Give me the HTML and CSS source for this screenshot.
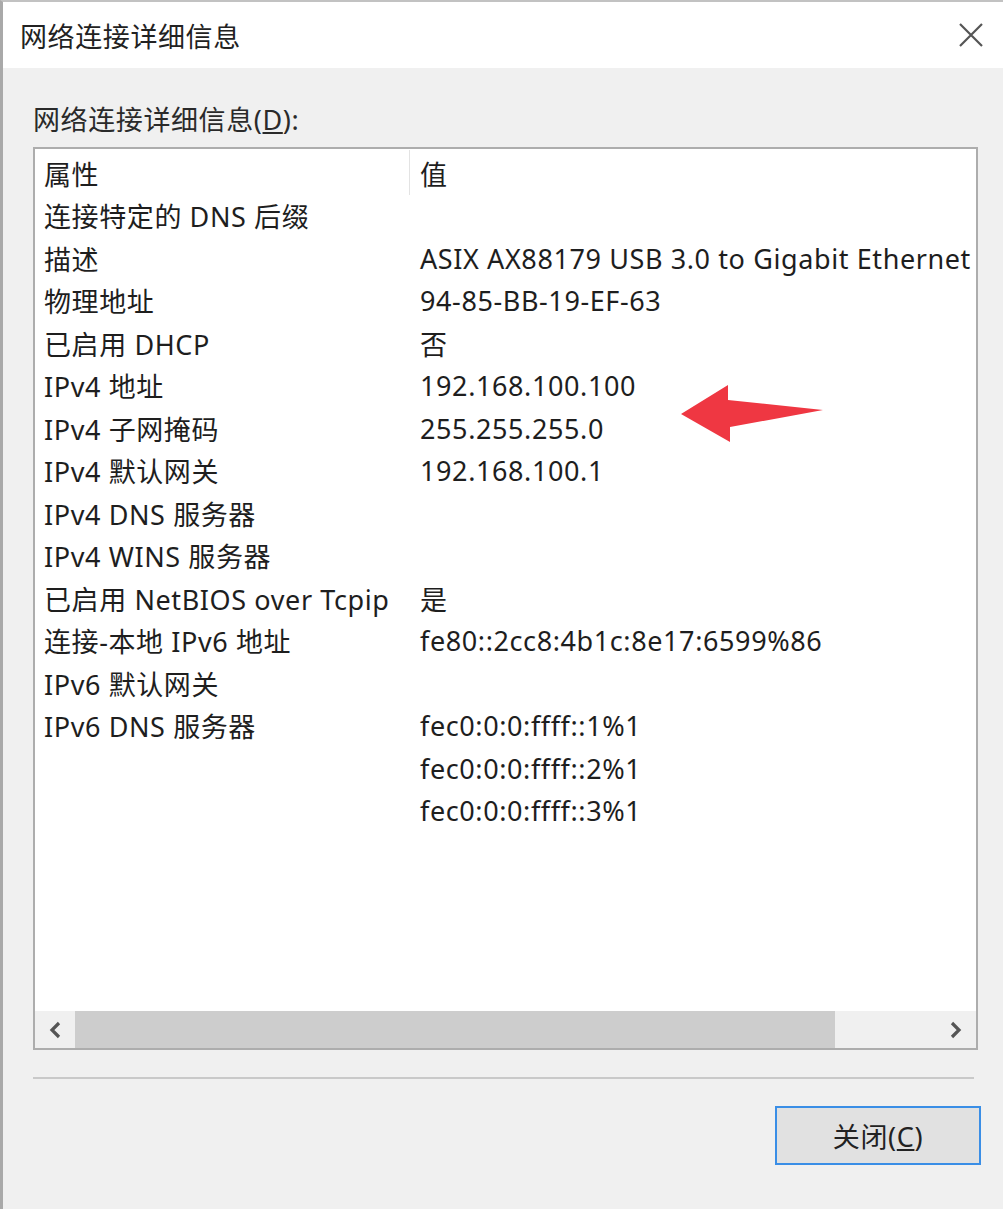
FILE: index.html
```html
<!DOCTYPE html>
<html lang="zh-CN">
<head>
<meta charset="utf-8">
<title>网络连接详细信息</title>
<link rel="stylesheet" href="styles.css">
</head>
<body>
<div class="window">
  <div class="titlebar">
    <span class="title">网络连接详细信息</span>
    <svg class="close-x" width="26" height="26" viewBox="0 0 26 26"><path d="M2 2 L24 24 M24 2 L2 24" stroke="#555" stroke-width="2.2" fill="none"/></svg>
  </div>
  <div class="content">
    <div class="label">网络连接详细信息(<u>D</u>):</div>
    <div class="listbox">
      <div class="rows">
        <div class="row header"><div class="cell">属性</div><div class="cell val">值</div></div>
        <div class="row"><div class="cell">连接特定的 DNS 后缀</div><div class="cell val"></div></div>
        <div class="row"><div class="cell">描述</div><div class="cell val">ASIX AX88179 USB 3.0 to Gigabit Ethernet</div></div>
        <div class="row"><div class="cell">物理地址</div><div class="cell val">94-85-BB-19-EF-63</div></div>
        <div class="row"><div class="cell">已启用 DHCP</div><div class="cell val">否</div></div>
        <div class="row"><div class="cell">IPv4 地址</div><div class="cell val">192.168.100.100</div></div>
        <div class="row"><div class="cell">IPv4 子网掩码</div><div class="cell val">255.255.255.0</div></div>
        <div class="row"><div class="cell">IPv4 默认网关</div><div class="cell val">192.168.100.1</div></div>
        <div class="row"><div class="cell">IPv4 DNS 服务器</div><div class="cell val"></div></div>
        <div class="row"><div class="cell">IPv4 WINS 服务器</div><div class="cell val"></div></div>
        <div class="row"><div class="cell">已启用 NetBIOS over Tcpip</div><div class="cell val">是</div></div>
        <div class="row"><div class="cell">连接-本地 IPv6 地址</div><div class="cell val">fe80::2cc8:4b1c:8e17:6599%86</div></div>
        <div class="row"><div class="cell">IPv6 默认网关</div><div class="cell val"></div></div>
        <div class="row"><div class="cell">IPv6 DNS 服务器</div><div class="cell val">fec0:0:0:ffff::1%1</div></div>
        <div class="row"><div class="cell"></div><div class="cell val">fec0:0:0:ffff::2%1</div></div>
        <div class="row"><div class="cell"></div><div class="cell val">fec0:0:0:ffff::3%1</div></div>
      </div>
      <div class="hscroll">
        <div class="sbtn"><svg width="16" height="18" viewBox="0 0 16 18"><path d="M12 2 L5 9 L12 16" stroke="#555" stroke-width="3.2" fill="none"/></svg></div>
        <div class="thumb"></div>
        <div class="track"></div>
        <div class="sbtn"><svg width="16" height="18" viewBox="0 0 16 18"><path d="M4 2 L11 9 L4 16" stroke="#555" stroke-width="3.2" fill="none"/></svg></div>
      </div>
    </div>
    <div class="separator"></div>
    <div class="buttons">
      <button class="btn">关闭(<u>C</u>)</button>
    </div>
  </div>
  <svg class="arrow" width="146" height="62" viewBox="0 0 146 62"><polygon points="1,31 48,2 48,17 143,27 50,44 50,59" fill="#ef3742"/></svg>
</div>
</body>
</html>
```

FILE: styles.css
```css
html, body {
  margin: 0;
  padding: 0;
  background: #f0f0f0;
  overflow: hidden;
}

body {
  font-family: "Noto Sans", "Noto Sans CJK SC", sans-serif;
  font-size: 27px;
  letter-spacing: 0.6px;
  color: #1e1e1e;
}

.window {
  position: relative;
  width: 1003px;
  height: 1209px;
  box-sizing: border-box;
  border-left: 3px solid #a9a9a9;
  border-top: 2px solid #c2c2c2;
  background: #f0f0f0;
  display: flex;
  flex-direction: column;
}

.titlebar {
  height: 66px;
  flex: none;
  background: #ffffff;
  display: flex;
  align-items: center;
  justify-content: space-between;
  padding: 0 19px 0 17px;
}

.title {
  font-size: 27px;
  color: #222;
}

.close-x {
  display: block;
}

.content {
  padding: 0 22px 0 30px;
  display: flex;
  flex-direction: column;
}

.label {
  height: 34px;
  line-height: 34px;
  margin-top: 35px;
  margin-bottom: 10px;
  color: #2a2a2a;
}

.listbox {
  width: 945px;
  height: 903px;
  box-sizing: border-box;
  border: 2px solid #adadad;
  background: #fff;
  display: flex;
  flex-direction: column;
  overflow: hidden;
}

.rows {
  flex: 1;
  overflow: hidden;
  padding-top: 3px;
}

.row {
  display: grid;
  grid-template-columns: 374px 1fr;
  height: 42.5px;
  align-items: center;
  white-space: nowrap;
}

.cell {
  padding-left: 9px;
  overflow: hidden;
}

.cell.val {
  padding-left: 11px;
}

.header .cell.val {
  border-left: 1px solid #e3e3e3;
  padding-left: 10px;
  align-self: stretch;
  display: flex;
  align-items: center;
  margin-top: -2px;
  padding-top: 2px;
}

.hscroll {
  height: 37px;
  flex: none;
  background: #f0f0f0;
  display: flex;
  align-items: center;
}

.sbtn {
  width: 40px;
  height: 37px;
  display: flex;
  align-items: center;
  justify-content: center;
  flex: none;
}

.sbtn svg {
  display: block;
}

.thumb {
  width: 760px;
  height: 37px;
  background: #cdcdcd;
  flex: none;
}

.track {
  flex: 1;
}

.separator {
  width: 941px;
  height: 2px;
  background: #c9c9c9;
  margin-top: 27px;
}

.buttons {
  display: flex;
  justify-content: flex-end;
  margin-top: 27px;
}

.btn {
  width: 206px;
  height: 59px;
  box-sizing: border-box;
  border: 2px solid #3a8ee6;
  background: #e1e1e1;
  font-family: "Noto Sans", "Noto Sans CJK SC", sans-serif;
  font-size: 27px;
  letter-spacing: 0.6px;
  color: #222;
  padding: 0;
  margin-right: 0;
}

.arrow {
  position: absolute;
  left: 677px;
  top: 381px;
}
```
